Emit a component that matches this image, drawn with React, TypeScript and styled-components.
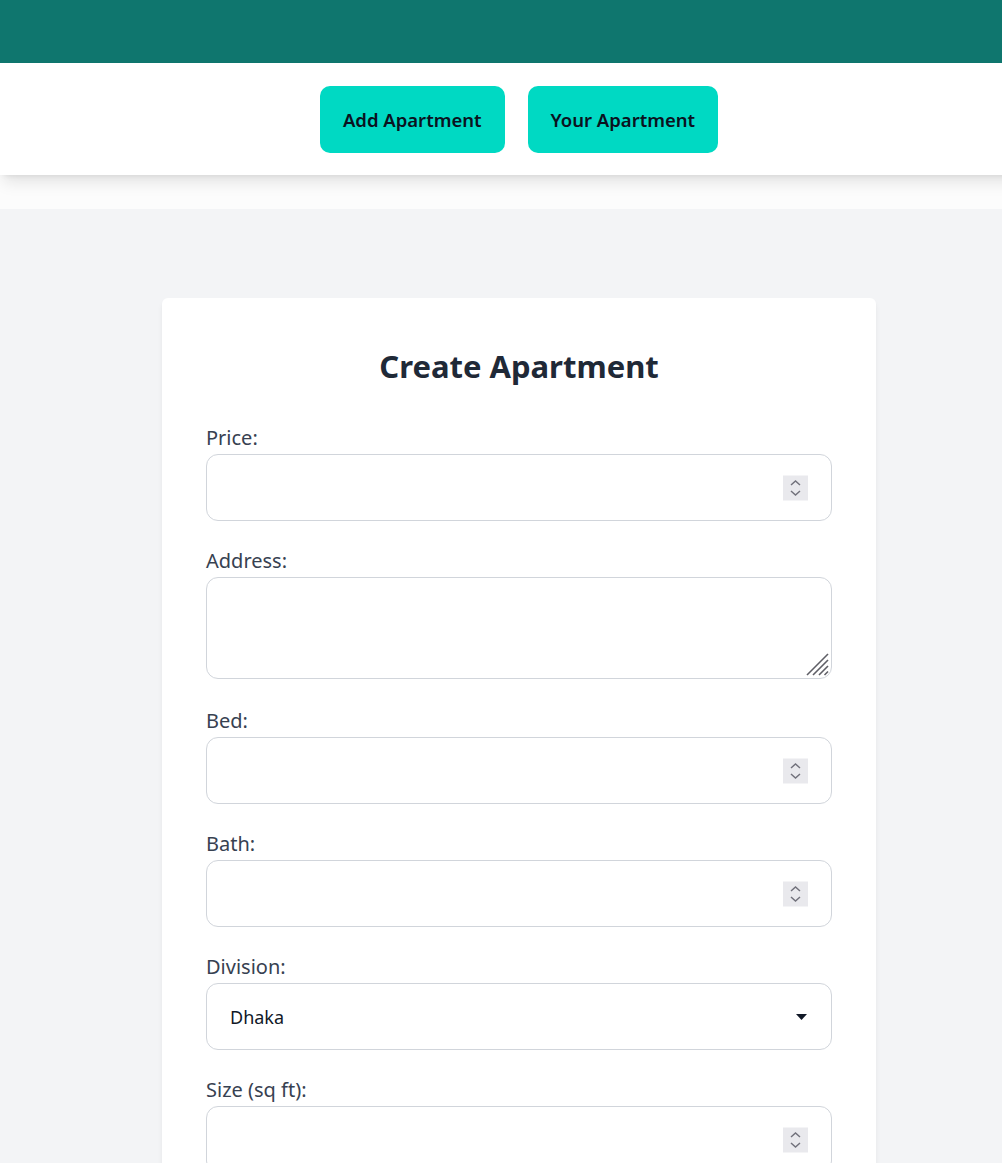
import React from "react";
import styled, { createGlobalStyle } from "styled-components";

const Global = createGlobalStyle`
  * { box-sizing: border-box; }
  html, body { margin: 0; padding: 0; background: #ffffff; overflow-x: hidden; }
  body { font-family: "Noto Sans", "Open Sans", Arial, sans-serif; color: #1f2937; }
  input[type=number]::-webkit-inner-spin-button,
  input[type=number]::-webkit-outer-spin-button { -webkit-appearance: none; margin: 0; }
`;

const Page = styled.div`
  width: 1038px;
`;

const TopBar = styled.header`
  height: 63px;
  background: #0f766e;
`;

const Nav = styled.nav`
  position: relative;
  z-index: 1;
  background: #ffffff;
  display: flex;
  justify-content: center;
  gap: 23px;
  padding: 23px 0 22px;
  box-shadow: 0 10px 15px -3px rgba(0, 0, 0, 0.1), 0 4px 6px -4px rgba(0, 0, 0, 0.1);
`;

const NavButton = styled.button`
  height: 67px;
  padding: 0 23px;
  border: none;
  border-radius: 10px;
  background: #00d9c3;
  color: #0b1220;
  font-family: inherit;
  font-size: 18.5px;
  font-weight: 600;
  cursor: pointer;
`;

const Spacer = styled.div`
  height: 34px;
  background: #fcfcfc;
`;

const Main = styled.main`
  background: #f3f4f6;
  padding: 89px 0 60px;
  min-height: 954px;
`;

const Card = styled.form`
  width: 714px;
  margin: 0 auto;
  background: #ffffff;
  border-radius: 6px;
  padding: 48px 44px 44px;
  box-shadow: 0 4px 6px -1px rgba(0, 0, 0, 0.07), 0 2px 4px -2px rgba(0, 0, 0, 0.05);
`;

const Title = styled.h1`
  margin: 0 0 38px;
  text-align: center;
  font-size: 31px;
  line-height: 40px;
  font-weight: 700;
  color: #1f2937;
`;

const Field = styled.div<{ $after?: number }>`
  display: flex;
  flex-direction: column;
  margin-bottom: ${(p) => p.$after ?? 26}px;
`;

const Label = styled.label`
  font-size: 20px;
  line-height: 28px;
  color: #374151;
  margin-bottom: 2px;
`;

const Control = styled.div`
  position: relative;
`;

const baseField = `
  width: 100%;
  border: 1px solid #d1d5db;
  border-radius: 12px;
  background: #ffffff;
  font-family: inherit;
  font-size: 18px;
  color: #111827;
  outline: none;
`;

const Input = styled.input`
  ${baseField}
  height: 67px;
  padding: 0 24px;
  appearance: textfield;
`;

const TextArea = styled.textarea`
  ${baseField}
  display: block;
  height: 102px;
  padding: 12px 24px;
  resize: none;
`;

const Select = styled.select`
  ${baseField}
  height: 67px;
  padding: 0 23px;
  appearance: none;
  -webkit-appearance: none;
`;

const Spin = styled.span`
  position: absolute;
  right: 24px;
  top: 50%;
  transform: translateY(-50%);
  width: 25px;
  height: 25px;
  background: #e9e9ed;
  display: flex;
  align-items: center;
  justify-content: center;
  pointer-events: none;
`;

const Corner = styled.span`
  position: absolute;
  right: 2px;
  bottom: 2px;
  width: 26px;
  height: 26px;
  pointer-events: none;
  display: flex;
`;

const Arrow = styled.span`
  position: absolute;
  right: 25px;
  top: 50%;
  transform: translateY(-50%);
  display: flex;
  pointer-events: none;
`;

const Spinner = () => (
  <Spin>
    <svg width="15" height="21" viewBox="0 0 15 21" fill="none" stroke="#72727c" strokeWidth="1.5">
      <path d="M3 7.5 L7.5 3.5 L12 7.5" />
      <path d="M3 13.5 L7.5 17.5 L12 13.5" />
    </svg>
  </Spin>
);

const NumberField = ({ label }: { label: string }) => (
  <Field>
    <Label>{label}</Label>
    <Control>
      <Input type="number" />
      <Spinner />
    </Control>
  </Field>
);

export default function App() {
  return (
    <Page>
      <Global />
      <TopBar />
      <Nav>
        <NavButton type="button">Add Apartment</NavButton>
        <NavButton type="button">Your Apartment</NavButton>
      </Nav>
      <Spacer />
      <Main>
        <Card onSubmit={(e) => e.preventDefault()}>
          <Title>Create Apartment</Title>
          <NumberField label="Price:" />
          <Field $after={28}>
            <Label>Address:</Label>
            <Control>
              <TextArea />
              <Corner>
                <svg width="26" height="26" viewBox="0 0 26 26" stroke="#5f5f66" strokeWidth="1.6">
                  <path d="M3 24 L24 3" />
                  <path d="M9 24 L24 9" />
                  <path d="M15 24 L24 15" />
                  <path d="M20.5 24 L24 20.5" />
                </svg>
              </Corner>
            </Control>
          </Field>
          <NumberField label="Bed:" />
          <NumberField label="Bath:" />
          <Field>
            <Label>Division:</Label>
            <Control>
              <Select defaultValue="Dhaka">
                <option>Dhaka</option>
                <option>Chattogram</option>
                <option>Khulna</option>
                <option>Rajshahi</option>
                <option>Barishal</option>
                <option>Sylhet</option>
                <option>Rangpur</option>
                <option>Mymensingh</option>
              </Select>
              <Arrow>
                <svg width="11" height="7" viewBox="0 0 11 7">
                  <path d="M0 0.5 H11 L5.5 6.5 Z" fill="#111827" />
                </svg>
              </Arrow>
            </Control>
          </Field>
          <NumberField label="Size (sq ft):" />
        </Card>
      </Main>
    </Page>
  );
}
